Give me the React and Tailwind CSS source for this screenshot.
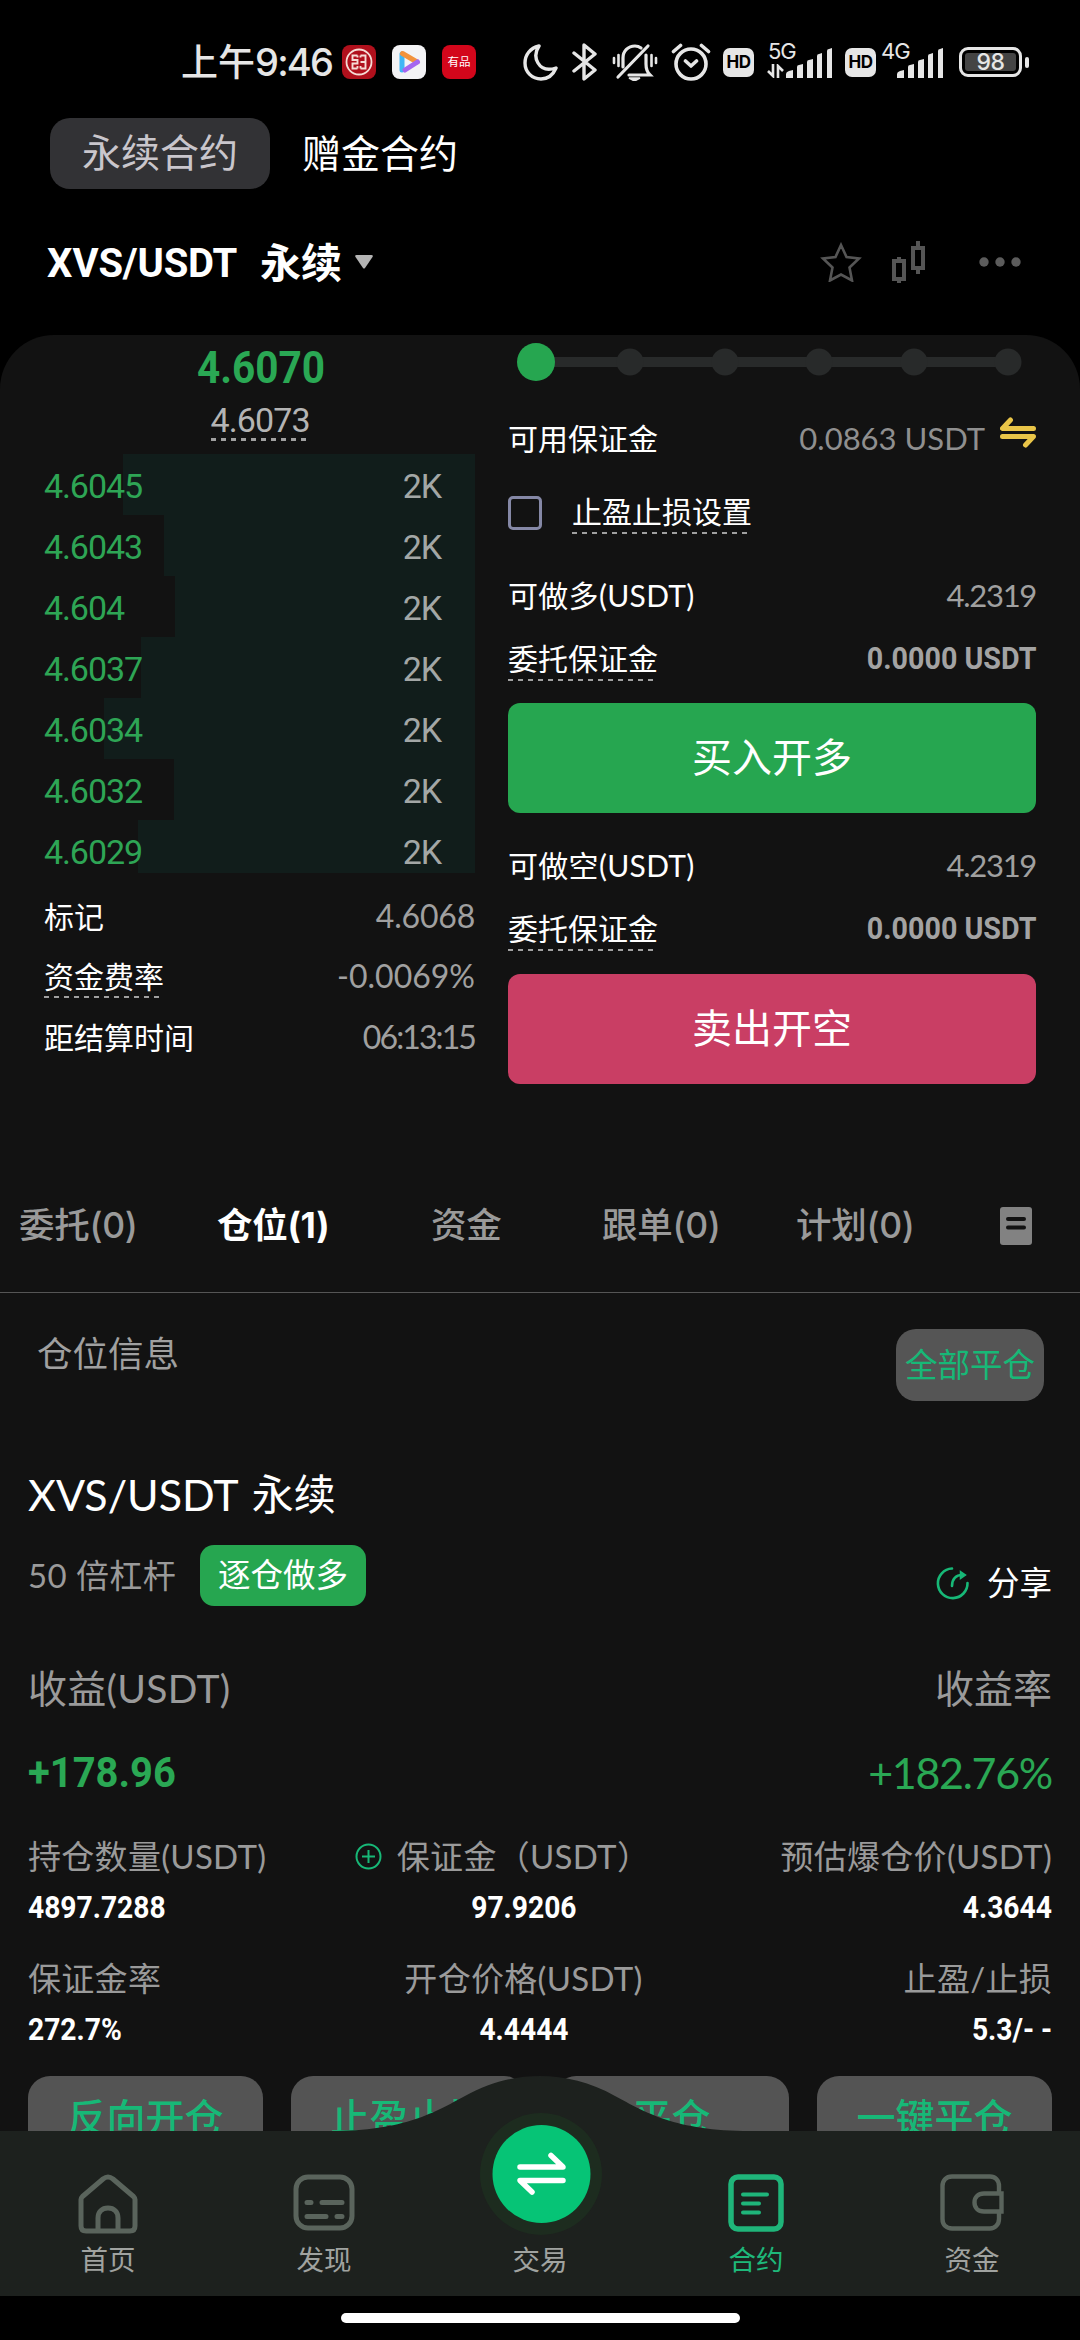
import React, { useState } from 'react';
import clsx from 'clsx';

const bids = [
  { price: '4.6045', amount: '2K', depth: 352 },
  { price: '4.6043', amount: '2K', depth: 311 },
  { price: '4.604', amount: '2K', depth: 300 },
  { price: '4.6037', amount: '2K', depth: 334 },
  { price: '4.6034', amount: '2K', depth: 371 },
  { price: '4.6032', amount: '2K', depth: 301 },
  { price: '4.6029', amount: '2K', depth: 337 },
];

const tabs = [
  { name: '委托(0)', className: 'w-[198px]' },
  { name: '仓位(1)', className: 'w-[214px]' },
  { name: '资金', className: 'w-[171px]' },
  { name: '跟单(0)', className: 'w-[194px]' },
  { name: '计划(0)', className: 'w-[204px]' },
];

// Narrow numerals used for prices
const Num = ({ className, children }) => (
  <span className={clsx("inline-block whitespace-nowrap font-['Roboto','Noto_Sans_CJK_SC',sans-serif]", className)}>
    {children}
  </span>
);

const Dashed = ({ className, children }) => (
  <span
    className={clsx(
      'bg-[linear-gradient(90deg,#a0a0a0_50%,transparent_50%)] bg-[length:10px_2px] bg-bottom-left bg-repeat-x',
      className
    )}
  >
    {children}
  </span>
);

const Signal = () => (
  <svg width="47" height="30" viewBox="0 0 47 30" fill="#e6e6e6">
    <path d="M0 30v-4q0-2 3-3l4-1v8z" />
    <path d="M11 30V19q0-2 2-2l4-1v14z" />
    <path d="M21 30V14q0-2 2-2l4-1v19z" />
    <path d="M31 30V8q0-2 2-2l3-1v25z" />
    <path d="M41 30V3q0-2 2-2l3-1v30z" />
  </svg>
);

const Hd = () => (
  <span className="flex h-[29px] w-[31px] items-center justify-center rounded-[7px] bg-[#e6e6e6] font-['Inter',sans-serif] text-[17px] font-bold tracking-[-0.5px] text-black">
    HD
  </span>
);

const StatusBar = () => (
  <div className="flex h-[118px] items-start pt-[43px] pl-[181px] text-[#e6e6e6]">
    <div className="h-[38px] w-[161px] text-[37px] leading-[38px] font-medium whitespace-nowrap">
      上午<span className="font-['Inter',sans-serif] text-[38px] tracking-[-1.8px]">9:46</span>
    </div>
    <svg className="mt-[2px]" width="34" height="34" viewBox="0 0 34 34" fill="none">
      <rect width="34" height="34" rx="8" fill="#b0101c" />
      <circle cx="17" cy="17" r="12.500" stroke="#f6dcd6" strokeWidth="1.800" />
      <path d="M15.500 10.500h-5v4.500h5v3.500h-5v5h5M18.500 10.500h5v13h-5M18.500 17h5M15.500 10.500v2M18.500 10.500v2M15.500 21v2.500M18.500 21v2.500" stroke="#f6dcd6" strokeWidth="1.900" />
    </svg>
    <svg className="mt-[2px] ml-4" width="34" height="34" viewBox="0 0 34 34" fill="none">
      <rect width="34" height="34" rx="8" fill="#f3f3f5" />
      <path d="M10 9v16" stroke="#3fb6f5" strokeWidth="5" strokeLinecap="round" />
      <path d="M10.500 8.500L25 17" stroke="#f2923c" strokeWidth="5" strokeLinecap="round" />
      <path d="M25.500 17L13 25" stroke="#a566f0" strokeWidth="5" strokeLinecap="round" />
    </svg>
    <span className="mt-[2px] ml-4 flex h-[34px] w-[34px] items-center justify-center rounded-lg bg-[#d3061b] text-[11.500px] leading-none text-white">
      有品
    </span>
    <svg className="ml-[46px]" width="36" height="38" viewBox="0 0 36 38" fill="none" stroke="#e6e6e6" strokeWidth="3.400" strokeLinejoin="round">
      <path d="M17 3C8 5 3 12 3 20c0 9 7 16 16 16 7 0 12-4 15-11-9 3-15 0-18-5s-3-11 1-17z" />
    </svg>
    <svg className="ml-[14px]" width="26" height="38" viewBox="0 0 26 38" fill="none" stroke="#e6e6e6" strokeWidth="3.400" strokeLinecap="round" strokeLinejoin="round">
      <path d="M2 10l21 17-11 9V2l11 9L2 28" />
    </svg>
    <svg className="ml-[14px]" width="46" height="38" viewBox="0 0 46 38" fill="none" stroke="#e6e6e6" strokeWidth="3.200" strokeLinecap="round">
      <path d="M11 24V15C11 8 16 3 23 3c2 0 4 .5 6 2M34 12v9c0 5 1 8 4 11H17" />
      <path d="M36 3L6 34" />
      <path d="M17 35h11l-5.500 3z" strokeWidth="1.500" fill="#e6e6e6" />
      <path d="M2 15v5M6.500 12v11M39.500 12v11M44 15v5" strokeWidth="2.600" />
    </svg>
    <svg className="ml-[13px]" width="40" height="38" viewBox="0 0 40 38" fill="none" stroke="#e6e6e6" strokeWidth="3.600" strokeLinecap="round" strokeLinejoin="round">
      <circle cx="20" cy="21" r="15" />
      <path d="M14.500 18l5.500 5 5.500-5M2.500 8.500l7-6M37.500 8.500l-7-6" />
    </svg>
    <div className="mt-[5px] ml-[12px]"><Hd /></div>
    <div className="ml-[13px] flex w-[66px] flex-col">
      <span className="ml-[1px] h-[16px] font-['Inter',sans-serif] text-[22px] leading-[17px] tracking-[-1px]">5G</span>
      <div className="-mt-[11px] flex items-end">
        <svg width="19" height="14" viewBox="0 0 19 14" fill="none" stroke="#e6e6e6" strokeWidth="2.600">
          <path d="M6 0v12L1 7M11 14V2l5 5" />
        </svg>
        <Signal />
      </div>
    </div>
    <div className="mt-[5px] ml-[12px]"><Hd /></div>
    <div className="ml-[5px] flex w-[64px] flex-col">
      <span className="h-[16px] font-['Inter',sans-serif] text-[22px] leading-[17px] tracking-[-1px]">4G</span>
      <div className="-mt-[11px] ml-[16px]"><Signal /></div>
    </div>
    <div className="mt-[4px] ml-[14px] flex items-center gap-[3px]">
      <div className="flex h-[30px] w-[63px] items-center justify-center rounded-[9px] border-[3px] border-[#e6e6e6] p-[3px]">
        <div className="flex h-full w-full items-center justify-center rounded-[3px] bg-[#444] font-['Inter',sans-serif] text-[23px] leading-none font-medium tracking-[-0.5px]">
          98
        </div>
      </div>
      <div className="h-[11px] w-[4px] rounded-full bg-[#e6e6e6]" />
    </div>
  </div>
);

const Header = () => (
  <>
    <div className="flex h-[71px] items-center pb-[1px] pl-[50px] text-[39px] leading-none">
      <div className="mt-[1px] flex h-[71px] w-[220px] items-center justify-center rounded-[20px] bg-[#323235] pb-[2px] text-[#c9c6cc]">
        永续合约
      </div>
      <div className="ml-[32px] text-white">赠金合约</div>
    </div>

    <div className="flex h-[146px] items-center pl-[47px] leading-none text-white">
      <Num className="w-[213px] pt-[3px] text-[40px] font-bold tracking-[-0.2px]">XVS/USDT</Num>
      <span className="text-[41px] font-bold">永续</span>
      <svg className="ml-[13px]" width="18" height="14" viewBox="0 0 18 14" fill="#b4b4b4">
        <path d="M1.500 0h15q2 0 1 2L10 13q-1 1-2 0L.5 2q-1-2 1-2z" />
      </svg>
      <svg className="ml-[447px]" width="42" height="40" viewBox="0 0 42 40" fill="none" stroke="#555" strokeWidth="2.600" strokeLinejoin="miter">
        <path d="M21 3l5.500 12 12.500 1.500-9.500 9 2.500 13L21 32.500 10 38.500l2.500-13-9.500-9L15.500 15z" />
      </svg>
      <svg className="ml-[30px]" width="34" height="42" viewBox="0 0 34 42" fill="none" stroke="#555" strokeWidth="4">
        <path d="M2 20h10v18H2zM7 16v4M7 38v4M21 7h10v20H21zM26 0v7M26 27v6" />
      </svg>
      <svg className="ml-[53px]" width="42" height="10" viewBox="0 0 42 10" fill="#5c5c5c">
        <circle cx="5" cy="5" r="4.700" />
        <circle cx="21" cy="5" r="4.700" />
        <circle cx="37" cy="5" r="4.700" />
      </svg>
    </div>
  </>
);

const OrderBook = () => (
  <div className="ml-[44px] flex w-[431px] flex-col leading-none">
    <div className="flex h-[64px] items-center justify-center pl-[3px]">
      <Num className="scale-x-90 text-[45px] font-bold text-[#2aa854]">4.6070</Num>
    </div>
    <div className="mb-[13px] flex h-[42px] justify-center">
      <Dashed className="h-[42px] w-[98px] bg-[length:10px_3px]">
        <Num className="text-[34px] leading-[42px] tracking-[-0.9px] text-[#b4b4b4]">4.6073</Num>
      </Dashed>
    </div>

    {/* Bids */}
    <div className="h-[419px] overflow-hidden">
      {bids.map((bid) => (
        <div key={bid.price} className="relative flex h-[61px] items-center justify-between pt-[3px] pr-[34px]">
          <div className="absolute inset-y-0 right-0 bg-[#111d1b]" style={{ width: bid.depth }} />
          <Num className="relative text-[34px] tracking-[-1.1px] text-[#2ea555]">{bid.price}</Num>
          <Num className="relative text-[34px] tracking-[-1.1px] text-[#a3a7a6]">{bid.amount}</Num>
        </div>
      ))}
    </div>

    <div className="mt-[12px] text-[30px] text-white">
      <div className="flex h-[61px] items-center justify-between">
        <span>标记</span>
        <span className="text-[32px] tracking-[-0.2px] text-[#a0a0a0]">4.6068</span>
      </div>
      <div className="flex h-[60px] items-center justify-between">
        <Dashed className="leading-[44px]">资金费率</Dashed>
        <span className="text-[32px] text-[#a0a0a0]">-0.0069%</span>
      </div>
      <div className="flex h-[61px] items-center justify-between">
        <span>距结算时间</span>
        <span className="text-[32px] tracking-[-1.900px] text-[#a0a0a0]">06:13:15</span>
      </div>
    </div>
  </div>
);

const MarginRows = ({ label }) => (
  <>
    <div className="flex h-[62px] items-center justify-between pb-[2px]">
      <span className="tracking-[0.3px]">{label}</span>
      <span className="text-[31px] tracking-[-1.300px] text-[#a0a0a0]">4.2319</span>
    </div>
    <div className="flex h-[62px] items-center justify-between">
      <Dashed className="leading-[46px]">委托保证金</Dashed>
      <Num className="origin-right scale-x-[.925] pt-[1px] text-[31px] font-bold text-[#a3a3a3]">0.0000 USDT</Num>
    </div>
  </>
);

const OrderForm = () => (
  <div className="ml-[33px] flex w-[528px] flex-col text-[30px] leading-none text-white">
    <svg width="528" height="54" viewBox="0 0 528 54" fill="#282a2a">
      <rect x="28" y="22" width="472" height="10" />
      {[122, 217, 311, 406, 500].map((cx) => (
        <circle key={cx} cx={cx} cy="27" r="13.500" />
      ))}
      <circle cx="28" cy="27" r="19" fill="#26a650" />
    </svg>

    <div className="flex h-[98px] items-center">
      <span>可用保证金</span>
      <span className="ml-auto text-[31px] text-[#8f8f8f]">0.0863 USDT</span>
      <svg className="-mt-[11px] ml-[15px]" width="36" height="31" viewBox="0 0 36 31" fill="none" stroke="#e9c548" strokeWidth="5" strokeLinecap="round" strokeLinejoin="round">
        <path d="M10.500 3l-8 8.500h31M2.500 19.500h31l-8 8.500" />
      </svg>
    </div>

    <label className="flex h-[51px] items-center">
      <input type="checkbox" className="h-[34px] w-[34px] appearance-none rounded-[5px] border-[3px] border-[#8588a6]" />
      <Dashed className="ml-[30px] pb-[2px] leading-[41px]">止盈止损设置</Dashed>
    </label>

    <div className="mt-[27px]">
      <MarginRows label="可做多(USDT)" />
    </div>
    <button type="button" className="mt-[14px] h-[110px] rounded-xl bg-[#26a650] pb-[2px] text-[40px] leading-none">
      买入开多
    </button>
    <div className="mt-[22px]">
      <MarginRows label="可做空(USDT)" />
    </div>
    <button type="button" className="mt-[15px] h-[110px] rounded-xl bg-[#c93e64] pb-[2px] text-[40px] leading-none">
      卖出开空
    </button>
  </div>
);

const Field = ({ label, value, icon, align }) => (
  <div className={clsx('flex flex-col', align)}>
    <div className="flex h-[72px] items-center tracking-[0.3px] whitespace-nowrap text-[#9a9a9a]">
      {icon}
      {label}
    </div>
    <div className="flex h-[30px] items-center">
      <Num
        className={clsx(
          'scale-x-[.91] text-[31px] font-bold text-white',
          align === 'items-start' && 'origin-left',
          align === 'items-end' && 'origin-right'
        )}
      >
        {value}
      </Num>
    </div>
  </div>
);

const Position = () => (
  <div className="leading-none">
    <div className="flex items-start justify-between pt-[36px] pr-[36px] pl-[37px]">
      <span className="text-[35.500px] leading-[49px] text-[#a0a0a0]">仓位信息</span>
      <button type="button" className="h-[72px] w-[148px] rounded-[20px] bg-[#555] text-[32.500px] leading-none whitespace-nowrap text-[#17b877]">
        全部平仓
      </button>
    </div>

    <div className="mt-[59px] pr-[28px] pl-[28px]">
      <div className="flex h-[70px] items-center pb-[2px] text-[43px] text-white">
        XVS/USDT<span className="ml-[13px] text-[42px]">永续</span>
      </div>

      <div className="mt-[15px] flex h-[61px] items-center text-[33px]">
        <span className="w-[172px] tracking-[0.4px] text-[#9a9a9a]">50 倍杠杆</span>
        <span className="flex h-[61px] w-[166px] items-center justify-center rounded-[14px] bg-[#26a650] text-[32.500px] text-white">
          逐仓做多
        </span>
        <div className="mt-[15px] ml-auto flex items-center text-white">
          <svg className="mr-[17px]" width="34" height="34" viewBox="0 0 34 34" fill="none" stroke="#17b877" strokeWidth="2.600" strokeLinecap="round">
            <path d="M16 2.500A14.800 14.800 0 1 0 31.500 17M16 20c0-7 4-11 10-11" />
            <path d="M24.500 5.500l5 3.500-5 3.500z" fill="#17b877" strokeWidth="1.500" />
          </svg>
          <span className="text-[32.500px]">分享</span>
        </div>
      </div>

      <div className="mt-[48px] flex h-[70px] items-center justify-between pb-[2px] text-[39px] text-[#9a9a9a]">
        <span className="tracking-[0.3px]">收益(USDT)</span>
        <span>收益率</span>
      </div>
      <div className="flex h-[96px] items-center justify-between text-[#2aa854]">
        <Num className="origin-left scale-x-95 pt-[2px] text-[42px] font-bold">+178.96</Num>
        <span className="text-[43px] tracking-[-1.300px]">+182.76%</span>
      </div>

      <div className="grid grid-cols-[237px_1fr_270px] gap-y-5 text-[33px]">
        <Field label="持仓数量(USDT)" value="4897.7288" align="items-start" />
        <Field
          label="保证金（USDT）"
          value="97.9206"
          align="items-center"
          icon={
            <svg className="mr-[15px] -ml-[42px]" width="27" height="27" viewBox="0 0 27 27" fill="none" stroke="#17b877" strokeWidth="2">
              <circle cx="13.500" cy="13.500" r="12" />
              <path d="M7 13.500h13M13.500 7v13" />
            </svg>
          }
        />
        <Field label="预估爆仓价(USDT)" value="4.3644" align="items-end" />
        <Field label="保证金率" value="272.7%" align="items-start" />
        <Field label="开仓价格(USDT)" value="4.4444" align="items-center" />
        <Field label="止盈/止损" value="5.3/- -" align="items-end" />
      </div>
    </div>

    <div className="mt-[32px] flex gap-[28px] px-[28px]">
      {['反向开仓', '止盈止损', '平仓', '一键平仓'].map((name) => (
        <button key={name} type="button" className="h-[83px] w-[235px] rounded-[22px] bg-[#545454] text-[39px] leading-none font-medium text-[#17b877]">
          {name}
        </button>
      ))}
    </div>
  </div>
);

const NavItem = ({ label, active, children }) => (
  <div className={clsx('flex w-[216px] flex-col items-center', active ? 'text-[#1eb87a]' : 'text-[#a0a3a0]')}>
    <div className="flex h-[110px] items-end">{children}</div>
    <span className="mt-[5px] text-[27.500px] leading-[28px]">{label}</span>
  </div>
);

const BottomNav = () => (
  <nav className="relative flex h-[165px] bg-[#1d211e]">
    {/* Raised middle */}
    <svg className="absolute -top-[56px] left-[330px]" width="420" height="160" viewBox="0 0 420 160" fill="none">
      <path d="M0 57v-1c75 0 105-19 135-35 25-14 50-20 75-20s50 6 75 20c30 16 60 35 135 35v1z" fill="#1d211e" />
      <circle cx="211" cy="99" r="61" fill="#1d2c1f" />
      <circle cx="211.500" cy="99" r="49" fill="#06c476" />
      <path d="M190 92h43l-12-11.500M233 105.500h-43l12 11.500" stroke="#fff" strokeWidth="5.500" strokeLinecap="round" strokeLinejoin="round" />
    </svg>

    <NavItem label="首页">
      <svg className="mb-[7px]" width="60" height="60" viewBox="0 0 60 60" fill="none" stroke="#5a645c" strokeWidth="5" strokeLinejoin="round">
        <path d="M3 25.500c0-1 .5-2 1.500-3L25 5q5-4 10 0l20.500 17.500c1 1 1.500 2 1.500 3V52q0 5-5 5H8q-5 0-5-5z" />
        <path d="M20 57V44c0-6 4-10 10-10s10 4 10 10v13" />
      </svg>
    </NavItem>
    <NavItem label="发现">
      <svg className="mb-[10px]" width="62" height="57" viewBox="0 0 62 57" fill="none" stroke="#5a645c" strokeWidth="5" strokeLinecap="round">
        <rect x="3" y="3" width="56" height="51" rx="12" />
        <path d="M14 28.500h4M29 28.500h20M14 42.500h19M44 42.500h5" />
      </svg>
    </NavItem>
    <NavItem label="交易" />
    <NavItem label="合约" active>
      <svg className="mb-[9px]" width="56" height="58" viewBox="0 0 56 58" fill="none" stroke="#1fb57a" strokeWidth="5.500" strokeLinecap="round">
        <rect x="3" y="3" width="50" height="52" rx="7" />
        <path d="M15 20.500h24M15 29.500h16M15 38.500h16" strokeWidth="4" />
      </svg>
    </NavItem>
    <NavItem label="资金">
      <svg className="mb-[10px]" width="64" height="57" viewBox="0 0 64 57" fill="none" stroke="#5a645c" strokeWidth="4.400">
        <path d="M59 19v-7c0-6-4-9.500-9-9.500H12c-6 0-9.500 4-9.500 9.500v33c0 6 4 9.500 9.500 9.500h38c5 0 9-4 9-9.500v-7" />
        <path d="M61.500 19.500H44c-6 0-9.500 4-9.500 9s3.500 9 9.500 9h17.500z" />
      </svg>
    </NavItem>
  </nav>
);

const App = () => {
  const [activeTab, setActiveTab] = useState('仓位(1)');

  return (
    <div
      lang="zh-CN"
      className="flex h-[2340px] w-[1080px] flex-col overflow-hidden bg-black font-['Lato','Noto_Sans_CJK_SC',sans-serif]"
    >
      <StatusBar />
      <Header />

      <main className="h-[1796px] overflow-hidden rounded-t-[54px] bg-[#121212]">
        <div className="flex h-[825px]">
          <OrderBook />
          <OrderForm />
        </div>

        {/* Tabs */}
        <div className="flex h-[133px] items-center border-b border-[#555] pl-[19px] font-['Inter','Noto_Sans_CJK_SC',sans-serif] text-[35.500px] leading-none">
          {tabs.map((tab) => (
            <button
              key={tab.name}
              type="button"
              onClick={() => setActiveTab(tab.name)}
              className={clsx(
                'shrink-0 text-left tracking-[-0.3px] whitespace-nowrap',
                tab.className,
                activeTab === tab.name ? 'font-bold text-white' : 'font-medium text-[#9a9a9a]'
              )}
            >
              {tab.name}
            </button>
          ))}
          <svg width="32" height="38" viewBox="0 0 32 38" fill="none">
            <rect width="32" height="38" rx="3" fill="#828282" />
            <path d="M8 12h16M8 20.500h16" stroke="#121212" strokeWidth="4" strokeLinecap="round" />
          </svg>
        </div>

        <Position />
      </main>

      <BottomNav />

      <div className="flex h-[44px] justify-center pt-[17px]">
        <div className="h-[10px] w-[399px] rounded-full bg-white" />
      </div>
    </div>
  );
};

export default App;
